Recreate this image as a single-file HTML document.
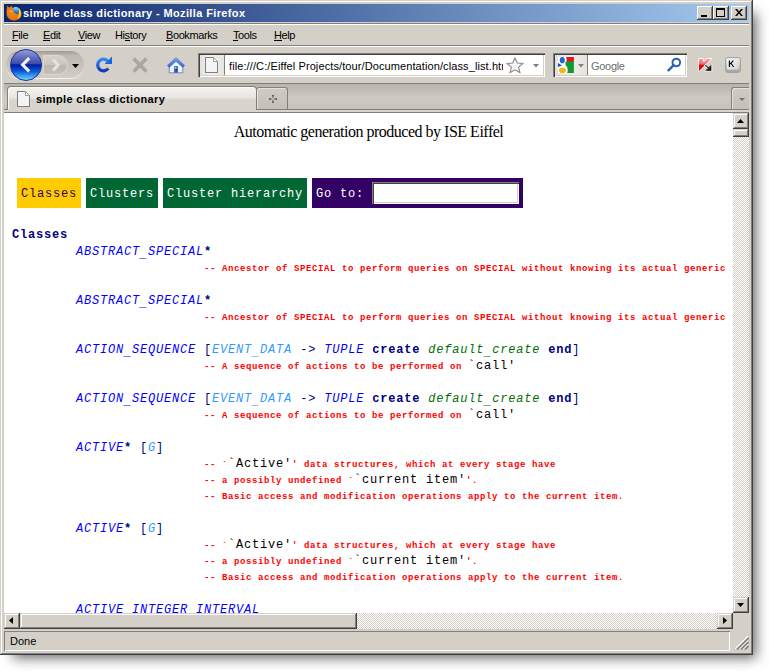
<!DOCTYPE html>
<html><head><meta charset="utf-8">
<style>
*{box-sizing:border-box}
html,body{margin:0;padding:0;width:769px;height:671px;overflow:hidden;background:#fff}
body{position:relative;font-family:"Liberation Sans",sans-serif}
.a{position:absolute}
#shadow{left:0;top:0;width:753px;height:655px;box-shadow:8px 8px 12px -5px rgba(0,0,0,0.6)}
#win{left:0;top:0;width:753px;height:655px;background:#D4D0C8;
 box-shadow:inset -1px -1px 0 #404040,inset 1px 1px 0 #D4D0C8,inset -2px -2px 0 #808080,inset 2px 2px 0 #fff}
#title{left:4px;top:4px;width:745px;height:18px;background:linear-gradient(to right,#0A246A,#A6CAF0)}
.ttxt{left:23px;top:7px;font-weight:bold;font-size:11px;line-height:13px;letter-spacing:0.37px;color:#fff;white-space:nowrap}
.cbtn{width:16px;height:14px;top:6px;background:#D4D0C8;box-shadow:inset -1px -1px 0 #404040,inset 1px 1px 0 #fff,inset -2px -2px 0 #808080}
.hl{height:1px}
.menu{top:29px;font-size:11px;line-height:13px;color:#000;white-space:nowrap;letter-spacing:-0.4px}
.menu u{text-decoration:none;background:linear-gradient(#000,#000) no-repeat;background-size:100% 1px;background-position:0 11px}
.sunk{background:#fff;box-shadow:inset 1px 1px 0 #808080,inset 2px 2px 0 #404040,inset -1px -1px 0 #fff,inset -2px -2px 0 #D4D0C8}
.btn3d{background:#D4D0C8;box-shadow:inset -1px -1px 0 #404040,inset 1px 1px 0 #D4D0C8,inset -2px -2px 0 #808080,inset 2px 2px 0 #fff}
.track{background-color:#fff;background-image:linear-gradient(45deg,#D4D0C8 25%,transparent 25%,transparent 75%,#D4D0C8 75%),linear-gradient(45deg,#D4D0C8 25%,transparent 25%,transparent 75%,#D4D0C8 75%);background-size:2px 2px;background-position:0 0,1px 1px}
.mono{font-family:"Liberation Mono",monospace;white-space:pre}
.ln{left:8px;font-family:"Liberation Mono",monospace;font-size:12px;letter-spacing:0.8px;line-height:16px;white-space:pre;color:#000}
.ln.c1{left:72px}.ln.c3{left:200px}
.cl{color:#0000FF;font-style:italic}
.gn{color:#3399FF;font-style:italic}
.kw{color:#000080;font-weight:bold}
.sy{color:#000080}
.ft{color:#006E00;font-style:italic}
.us{position:relative;top:2px}
.cm{color:#FF0000;font-size:9px;letter-spacing:0.6px;font-weight:bold}
</style></head><body>
<div id="shadow" class="a"></div>
<div id="win" class="a">
  <div id="title" class="a">
  </div>
</div>
<!-- title bar content -->
<svg class="a" style="left:6px;top:5px" width="16" height="16" viewBox="0 0 16 16">
 <defs>
  <radialGradient id="ffo" cx="0.4" cy="0.45" r="0.65"><stop offset="0" stop-color="#f08a1c"/><stop offset="0.8" stop-color="#e8700e"/><stop offset="1" stop-color="#c85008"/></radialGradient>
  <linearGradient id="ffb" x1="0" y1="0" x2="0" y2="1"><stop offset="0" stop-color="#8ae6ff"/><stop offset="0.45" stop-color="#2c92e2"/><stop offset="1" stop-color="#0a348e"/></linearGradient>
 </defs>
 <circle cx="9.6" cy="6.4" r="4.4" fill="url(#ffb)"/>
 <path d="M12.3 2.6 C14.6 4.2 15.8 7 15.6 9.6 C15.2 13.2 12 15.6 8.2 15.6 C4 15.6 0.6 12.4 0.5 8.2 C0.5 5.5 1.2 3 0.9 0.6 L3.2 2.6 L5.6 0.8 L6.8 3.4 L8.4 4.6 L7.2 6 L8.4 7.8 L10.6 9 L12.2 9 C13.4 7.6 13.6 4.8 12.3 2.6Z" fill="url(#ffo)"/>
 <path d="M8.2 7.6 L9 7.2 L8.8 8.2Z" fill="#7a2a0a"/>
 <path d="M12.8 3.2 C14.8 5 15.4 8 14.6 10.8 C14 12.6 12.6 13.8 11 14.4 C12.8 12.6 13.6 9.6 12.8 3.2Z" fill="#ffd23c"/>
 <path d="M3.2 6 L6 5.4 L6.6 6.8 L3.8 7.2Z" fill="#ffc070" opacity="0.8"/>
</svg>
<div class="a ttxt" id="ttxt">simple class dictionary - Mozilla Firefox</div>
<div class="a cbtn" style="left:697px"><div class="a" style="left:4px;top:9px;width:6px;height:2px;background:#000"></div></div>
<div class="a cbtn" style="left:713px"><div class="a" style="left:3px;top:2px;width:9px;height:9px;border:1px solid #000;border-top-width:2px"></div></div>
<div class="a cbtn" style="left:731px">
  <svg class="a" style="left:4px;top:3px" width="8" height="7" viewBox="0 0 8 7"><path d="M0 0h2l2 2.5L6 0h2L5 3.5 8 7H6L4 4.5 2 7H0l3-3.5z" fill="#000"/></svg>
</div>
<!-- separators under title -->
<div class="a hl" style="left:4px;top:23px;width:745px;background:#808080"></div>
<div class="a hl" style="left:4px;top:24px;width:745px;background:#fff"></div>
<!-- menu -->
<div class="a menu" style="left:12px"><u>F</u>ile</div>
<div class="a menu" style="left:43px"><u>E</u>dit</div>
<div class="a menu" style="left:78px"><u>V</u>iew</div>
<div class="a menu" style="left:115px">Hi<u>s</u>tory</div>
<div class="a menu" style="left:166px"><u>B</u>ookmarks</div>
<div class="a menu" style="left:233px"><u>T</u>ools</div>
<div class="a menu" style="left:274px"><u>H</u>elp</div>
<div class="a hl" style="left:4px;top:45px;width:745px;background:#808080"></div>
<div class="a hl" style="left:4px;top:46px;width:745px;background:#fff"></div>

<!-- nav bar -->
<div class="a" style="left:6px;top:51px;width:78px;height:27px;border-radius:13.5px;background:linear-gradient(#a09c94 0,#aca8a0 2px,#bcb8b0 4px,#c6c2ba 50%,#d2cec6 100%);box-shadow:0 1px 0 #f4f2ee"></div>
<svg class="a" style="left:42px;top:54px" width="27" height="22" viewBox="0 0 27 22">
 <defs><linearGradient id="fwg" x1="0" y1="0" x2="0" y2="1"><stop offset="0" stop-color="#d6d2ca"/><stop offset="0.5" stop-color="#cac6be"/><stop offset="0.52" stop-color="#bcb8b0"/><stop offset="1" stop-color="#c4c0b8"/></linearGradient></defs>
 <path d="M1.5 1.5 H16 A9.5 9.5 0 0 1 16 20.5 H1.5Z" fill="url(#fwg)" stroke="#dcd9d2" stroke-width="1"/>
 <path d="M11 5.5 L16 11 L11 16.5" stroke="#e6e4de" stroke-width="3" fill="none"/>
</svg>
<svg class="a" style="left:72px;top:64px" width="7" height="4"><path d="M0 0h7L3.5 4z" fill="#000"/></svg>
<svg class="a" style="left:10px;top:49px" width="33" height="33" viewBox="0 0 33 33">
 <defs>
  <linearGradient id="bg1" x1="0" y1="0" x2="0" y2="1">
   <stop offset="0" stop-color="#9aa4dc"/><stop offset="0.12" stop-color="#7c88cc"/><stop offset="0.47" stop-color="#3a48a8"/>
   <stop offset="0.49" stop-color="#0018a0"/><stop offset="0.7" stop-color="#0a5ad8"/><stop offset="1" stop-color="#70e0ff"/>
  </linearGradient>
 </defs>
 <circle cx="16" cy="16" r="15.5" fill="url(#bg1)" stroke="#2030a0" stroke-width="1"/>
 <path d="M19.2 9.2 L12.6 15.8 L19.2 22.4" stroke="#f0efea" stroke-width="3.1" fill="none" stroke-linejoin="miter"/>
</svg>
<!-- reload -->
<svg class="a" style="left:96px;top:56px" width="17" height="18" viewBox="0 0 17 18">
 <defs><linearGradient id="rlg" x1="0" y1="0" x2="0" y2="1"><stop offset="0" stop-color="#3a86f0"/><stop offset="1" stop-color="#0a3cc0"/></linearGradient></defs>
 <path d="M12.25 12.33 A5.8 5.8 0 1 1 11.94 5.27" stroke="url(#rlg)" stroke-width="3.3" fill="none"/>
 <path d="M16 0.6 L16 8 L8.6 8Z" fill="#1a66e0"/>
</svg>
<!-- stop -->
<svg class="a" style="left:131px;top:56px" width="18" height="18" viewBox="0 0 18 18">
 <path d="M2.6 2.4 L15.4 15.4 M15.4 2.4 L2.6 15.4" stroke="#a8a7a2" stroke-width="3.6"/>
</svg>
<!-- home -->
<svg class="a" style="left:166px;top:56px" width="20" height="18" viewBox="0 0 20 18">
 <defs><linearGradient id="hrg" x1="0" y1="0" x2="0" y2="1"><stop offset="0" stop-color="#74a4ec"/><stop offset="1" stop-color="#3a62cc"/></linearGradient></defs>
 <path d="M3.3 10 L10 4.5 L16.8 10 V16.8 H3.3Z" fill="#eaf6fd" stroke="#6070b0" stroke-width="0.8"/>
 <path d="M10 1 L19 9.6 L16.8 11.8 L10 5.8 L3.2 11.8 L1 9.6Z" fill="url(#hrg)"/>
 <rect x="8.1" y="10.1" width="3.7" height="6.6" fill="#2a5ac8"/>
 <rect x="8.7" y="10.8" width="1.6" height="1.8" fill="#a8dcf4"/>
 <rect x="10.6" y="13.6" width="1" height="1" fill="#000"/>
</svg>
<!-- address bar -->
<div class="a sunk" style="left:198px;top:53px;width:347px;height:24px"></div>
<div class="a" style="left:200px;top:55px;width:25px;height:20px;background:linear-gradient(to right,#e4e2dc,#f2f1ee 40%,#e8e6e0);border-right:1px solid #808080"></div>
<svg class="a" style="left:205px;top:57px" width="13" height="16" viewBox="0 0 13 16">
 <path d="M0.5 0.5 H8.5 L12.5 4.5 V15.5 H0.5Z" fill="#f4f4f4" stroke="#808080" shape-rendering="crispEdges"/>
 <path d="M8.5 0.5 V4.5 H12.5Z" fill="#fff" stroke="#a0a0a0" shape-rendering="crispEdges"/>
</svg>
<div class="a" style="left:229px;top:60px;font-size:11px;line-height:13px;letter-spacing:0.1px;white-space:nowrap;color:#000;width:274px;overflow:hidden" id="url2">file:///C:/Eiffel Projects/tour/Documentation/class_list.htm</div>
<svg class="a" style="left:506px;top:57px" width="18" height="17" viewBox="0 0 18 17">
 <path d="M9 1 L11.3 6 L16.8 6.5 L12.6 10.2 L13.9 15.6 L9 12.8 L4.1 15.6 L5.4 10.2 L1.2 6.5 L6.7 6Z" fill="#f6f6f6" stroke="#8a8a8a" stroke-width="1.1"/>
</svg>
<svg class="a" style="left:533px;top:64px" width="6" height="4"><path d="M0 0h6L3 3.5z" fill="#808080"/></svg>
<!-- search bar -->
<div class="a sunk" style="left:553px;top:53px;width:134px;height:24px"></div>
<div class="a" style="left:555px;top:55px;width:33px;height:20px;background:linear-gradient(to right,#e4e2dc,#f0efec 50%,#e4e2dc);border-right:1px solid #808080"></div>
<svg class="a" style="left:558px;top:57px" width="16" height="16" viewBox="0 0 16 16">
 <rect x="0" y="0" width="16" height="16" fill="#fff"/>
 <ellipse cx="4.3" cy="3.2" rx="2.5" ry="3.1" fill="#1a66d0"/>
 <path d="M8.1 0 H15.9 V5.5 H8.6 C8.8 4 8.6 2 8.1 0Z" fill="#e8141c"/>
 <path d="M7.8 4.6 H15.9 V15.9 H9.2 C10.2 14 9.8 11 8.6 9.5 C7.4 8.4 7 6.6 7.8 4.6Z" fill="#109a30"/>
 <path d="M0 5.9 L4 8.4 L0 10.1Z" fill="#1a50b0"/>
 <ellipse cx="4.4" cy="13.2" rx="3.45" ry="2.8" fill="#f0b810"/>
</svg>
<svg class="a" style="left:578px;top:64px" width="6" height="4"><path d="M0 0h6L3 3.5z" fill="#808080"/></svg>
<div class="a" style="left:591px;top:60px;font-size:11px;line-height:13px;letter-spacing:-0.3px;color:#6d6d6d;white-space:nowrap">Google</div>
<svg class="a" style="left:667px;top:57px" width="15" height="15" viewBox="0 0 15 15">
 <circle cx="9.3" cy="5.5" r="3.8" stroke="#2a64b0" stroke-width="2" fill="none"/>
 <path d="M6.6 8.2 L1.5 13.3" stroke="#2a64b0" stroke-width="2.4" stroke-linecap="round"/>
</svg>
<!-- kaspersky -->
<svg class="a" style="left:697px;top:57px" width="17" height="16" viewBox="0 0 17 16">
 <defs><linearGradient id="ksg" x1="0" y1="0" x2="0" y2="1"><stop offset="0" stop-color="#f4a0a6"/><stop offset="0.45" stop-color="#ee6a74"/><stop offset="0.5" stop-color="#e8000e"/><stop offset="1" stop-color="#e0000c"/></linearGradient>
 <linearGradient id="kag" x1="0" y1="0" x2="1" y2="1"><stop offset="0" stop-color="#707070"/><stop offset="1" stop-color="#000"/></linearGradient></defs>
 <path d="M1.5 1.5 H6.2 L6.8 4.6 L10 1.5 H15 L2.2 14.3 H1.5 Z" fill="url(#ksg)" stroke="#fff" stroke-width="0.9"/>
 <path d="M7.2 9 L9 7.2 L11.6 9.8 L14.8 6.6 V14.3 H7.1 L10.3 11.1 Z" fill="url(#kag)" stroke="#fff" stroke-width="0.8"/>
</svg>
<!-- K key -->
<svg class="a" style="left:725px;top:57px" width="16" height="16" viewBox="0 0 16 16">
 <defs><linearGradient id="kko" x1="0" y1="0" x2="0" y2="1"><stop offset="0" stop-color="#e8e8e8"/><stop offset="1" stop-color="#a0a0a0"/></linearGradient>
 <linearGradient id="kki" x1="0" y1="0" x2="1" y2="1"><stop offset="0" stop-color="#f6f6f6"/><stop offset="1" stop-color="#d6d6d6"/></linearGradient></defs>
 <rect x="0.5" y="0.5" width="15" height="15" rx="2.5" fill="url(#kko)" stroke="#a4a4a4"/>
 <rect x="2" y="1.5" width="11.8" height="11" rx="1" fill="url(#kki)"/>
 <path d="M4.4 3.6 V10 M8.4 3.6 L4.6 7.4 M6 6.2 L8.6 10" stroke="#000" stroke-width="1.15" fill="none"/>
</svg>
<!-- tab strip -->
<div class="a" style="left:4px;top:83px;width:745px;height:1px;background:#808080"></div>
<div class="a" style="left:4px;top:84px;width:745px;height:25px;background:linear-gradient(#b8b4ac,#cfcbc3 55%,#c6c2ba)"></div>
<div class="a" style="left:4px;top:109px;width:745px;height:1px;background:#808080"></div>
<div class="a" style="left:4px;top:110px;width:745px;height:2px;background:#d8d4cc"></div>
<div class="a" style="left:4px;top:112px;width:745px;height:1px;background:#808080"></div>
<!-- active tab -->
<div class="a" style="left:7px;top:86px;width:250px;height:24px;border:1px solid #808080;border-bottom:none;border-radius:4px 4px 0 0;background:linear-gradient(#f4f3f0,#e8e6e1 45%,#d8d5ce 55%,#d8d4cc);box-shadow:inset 1px 1px 0 #fbfaf8"></div>
<div class="a" style="left:8px;top:109px;width:248px;height:3px;background:#d8d4cc"></div>
<svg class="a" style="left:17px;top:91px" width="13" height="16" viewBox="0 0 13 16">
 <path d="M0.5 0.5 H8.5 L12.5 4.5 V15.5 H0.5Z" fill="#f4f4f4" stroke="#808080" shape-rendering="crispEdges"/>
 <path d="M8.5 0.5 V4.5 H12.5Z" fill="#fff" stroke="#a0a0a0" shape-rendering="crispEdges"/>
</svg>
<div class="a" id="tabtxt" style="left:36px;top:93px;font-weight:bold;font-size:11px;line-height:13px;letter-spacing:0.35px;color:#000;white-space:nowrap">simple class dictionary</div>
<!-- new tab -->
<div class="a" style="left:256px;top:87px;width:32px;height:22px;border:1px solid #808080;border-bottom:none;border-radius:3px 3px 0 0;background:linear-gradient(#d0ccc4,#c8c4bc 60%,#c4c0b8);box-shadow:inset 1px 1px 0 #e4e2dc"></div>
<svg class="a" style="left:269px;top:95px" width="8" height="8" viewBox="0 0 8 8">
 <defs><linearGradient id="plh" x1="0" y1="0" x2="1" y2="0"><stop offset="0" stop-color="#505050"/><stop offset="0.5" stop-color="#c8c8c8"/><stop offset="1" stop-color="#505050"/></linearGradient>
 <linearGradient id="plv" x1="0" y1="0" x2="0" y2="1"><stop offset="0" stop-color="#505050"/><stop offset="0.5" stop-color="#c8c8c8"/><stop offset="1" stop-color="#505050"/></linearGradient></defs>
 <rect x="0" y="3" width="8" height="2" fill="url(#plh)"/>
 <rect x="3" y="0" width="2" height="8" fill="url(#plv)"/>
</svg>
<!-- tab list -->
<div class="a" style="left:731px;top:87px;width:18px;height:22px;border:1px solid #808080;border-right:none;border-bottom:none;border-radius:3px 0 0 0;background:linear-gradient(#d0ccc4,#c8c4bc 60%,#c4c0b8);box-shadow:inset 1px 1px 0 #e4e2dc"></div>
<svg class="a" style="left:739px;top:98px" width="6" height="3"><path d="M0 0h6L3 3z" fill="#707070"/></svg>

<!-- content -->
<div class="a" id="content" style="left:4px;top:113px;width:729px;height:500px;background:#fff;overflow:hidden">
<div class="a" style="left:0;top:10px;width:729px;text-align:center;font-family:'Liberation Serif',serif;font-size:16px;line-height:18px;letter-spacing:-0.49px;color:#000">Automatic generation produced by ISE Eiffel</div>
<div class="a mono" style="left:13px;top:65px;width:64px;height:30px;background:#FFCC00;color:#330066;font-size:12px;letter-spacing:0.8px;line-height:32px;padding-left:4px;overflow:hidden">Classes</div>
<div class="a mono" style="left:82px;top:65px;width:72px;height:30px;background:#006633;color:#fff;font-size:12px;letter-spacing:0.8px;line-height:32px;padding-left:4px;overflow:hidden">Clusters</div>
<div class="a mono" style="left:159px;top:65px;width:144px;height:30px;background:#006633;color:#fff;font-size:12px;letter-spacing:0.8px;line-height:32px;padding-left:4px;overflow:hidden">Cluster hierarchy</div>
<div class="a mono" style="left:308px;top:65px;width:211px;height:30px;background:#330066;color:#fff;font-size:12px;letter-spacing:0.8px;line-height:32px;padding-left:4px;overflow:hidden">Go to:</div>
<div class="a sunk" style="left:368px;top:69px;width:147px;height:22px"></div>
<div class="a ln" style="top:114px"><span class="kw">Classes</span></div>
<div class="a ln c1" style="top:131px"><span class="cl">ABSTRACT<span class="us">_</span>SPECIAL</span><span class="kw">*</span></div>
<div class="a ln c3" style="top:147px"><span class="cm">-- Ancestor of SPECIAL to perform queries on SPECIAL without knowing its actual generic type</span></div>
<div class="a ln c1" style="top:180px"><span class="cl">ABSTRACT<span class="us">_</span>SPECIAL</span><span class="kw">*</span></div>
<div class="a ln c3" style="top:196px"><span class="cm">-- Ancestor of SPECIAL to perform queries on SPECIAL without knowing its actual generic type</span></div>
<div class="a ln c1" style="top:229px"><span class="cl">ACTION<span class="us">_</span>SEQUENCE</span> <span class="sy">[</span><span class="gn">EVENT<span class="us">_</span>DATA</span> <span class="sy">-&gt;</span> <span class="cl">TUPLE</span> <span class="kw">create</span> <span class="ft">default<span class="us">_</span>create</span> <span class="kw">end</span><span class="sy">]</span></div>
<div class="a ln c3" style="top:245px"><span class="cm">-- A sequence of actions to be performed on </span>`call'</div>
<div class="a ln c1" style="top:278px"><span class="cl">ACTION<span class="us">_</span>SEQUENCE</span> <span class="sy">[</span><span class="gn">EVENT<span class="us">_</span>DATA</span> <span class="sy">-&gt;</span> <span class="cl">TUPLE</span> <span class="kw">create</span> <span class="ft">default<span class="us">_</span>create</span> <span class="kw">end</span><span class="sy">]</span></div>
<div class="a ln c3" style="top:294px"><span class="cm">-- A sequence of actions to be performed on </span>`call'</div>
<div class="a ln c1" style="top:327px"><span class="cl">ACTIVE</span><span class="kw">*</span> <span class="sy">[</span><span class="gn">G</span><span class="sy">]</span></div>
<div class="a ln c3" style="top:343px"><span class="cm">-- `</span>`Active'<span class="cm">' data structures, which at every stage have</span></div>
<div class="a ln c3" style="top:359px"><span class="cm">-- a possibly undefined `</span>`current item'<span class="cm">'.</span></div>
<div class="a ln c3" style="top:375px"><span class="cm">-- Basic access and modification operations apply to the current item.</span></div>
<div class="a ln c1" style="top:408px"><span class="cl">ACTIVE</span><span class="kw">*</span> <span class="sy">[</span><span class="gn">G</span><span class="sy">]</span></div>
<div class="a ln c3" style="top:424px"><span class="cm">-- `</span>`Active'<span class="cm">' data structures, which at every stage have</span></div>
<div class="a ln c3" style="top:440px"><span class="cm">-- a possibly undefined `</span>`current item'<span class="cm">'.</span></div>
<div class="a ln c3" style="top:456px"><span class="cm">-- Basic access and modification operations apply to the current item.</span></div>
<div class="a ln c1" style="top:489px"><span class="cl">ACTIVE<span class="us">_</span>INTEGER<span class="us">_</span>INTERVAL</span></div>
</div>

<!-- vertical scrollbar -->
<div class="a track" style="left:733px;top:113px;width:16px;height:500px"></div>
<div class="a btn3d" style="left:733px;top:113px;width:16px;height:16px"><svg class="a" style="left:4px;top:6px" width="7" height="4"><path d="M3.5 0L7 4H0z" fill="#000"/></svg></div>
<div class="a btn3d" style="left:733px;top:129px;width:16px;height:8px"></div>
<div class="a btn3d" style="left:733px;top:597px;width:16px;height:16px"><svg class="a" style="left:4px;top:6px" width="7" height="4"><path d="M0 0h7L3.5 4z" fill="#000"/></svg></div>
<!-- horizontal scrollbar -->
<div class="a track" style="left:4px;top:613px;width:729px;height:16px"></div>
<div class="a btn3d" style="left:4px;top:613px;width:16px;height:16px"><svg class="a" style="left:5px;top:4px" width="4" height="7"><path d="M4 0V7L0 3.5z" fill="#000"/></svg></div>
<div class="a btn3d" style="left:20px;top:613px;width:337px;height:16px"></div>
<div class="a btn3d" style="left:717px;top:613px;width:16px;height:16px"><svg class="a" style="left:6px;top:4px" width="4" height="7"><path d="M0 0V7L4 3.5z" fill="#000"/></svg></div>
<!-- status bar -->
<div class="a" style="left:4px;top:631px;width:726px;height:20px;box-shadow:inset 1px 1px 0 #808080,inset -1px -1px 0 #fff"></div>
<div class="a" style="left:10px;top:635px;font-size:11px;line-height:13px;color:#000">Done</div>
<svg class="a" style="left:735px;top:636px" width="14" height="14" viewBox="0 0 14 14">
 <path d="M0.3 12.7 L12.7 0.3 M4.3 12.7 L12.7 4.3 M8.3 12.7 L12.7 8.3" stroke="#fff" stroke-width="1.2"/>
 <path d="M2 13.5 L13.5 2 M6 13.5 L13.5 6 M10 13.5 L13.5 10" stroke="#808080" stroke-width="1.6"/>
</svg>
</body></html>
